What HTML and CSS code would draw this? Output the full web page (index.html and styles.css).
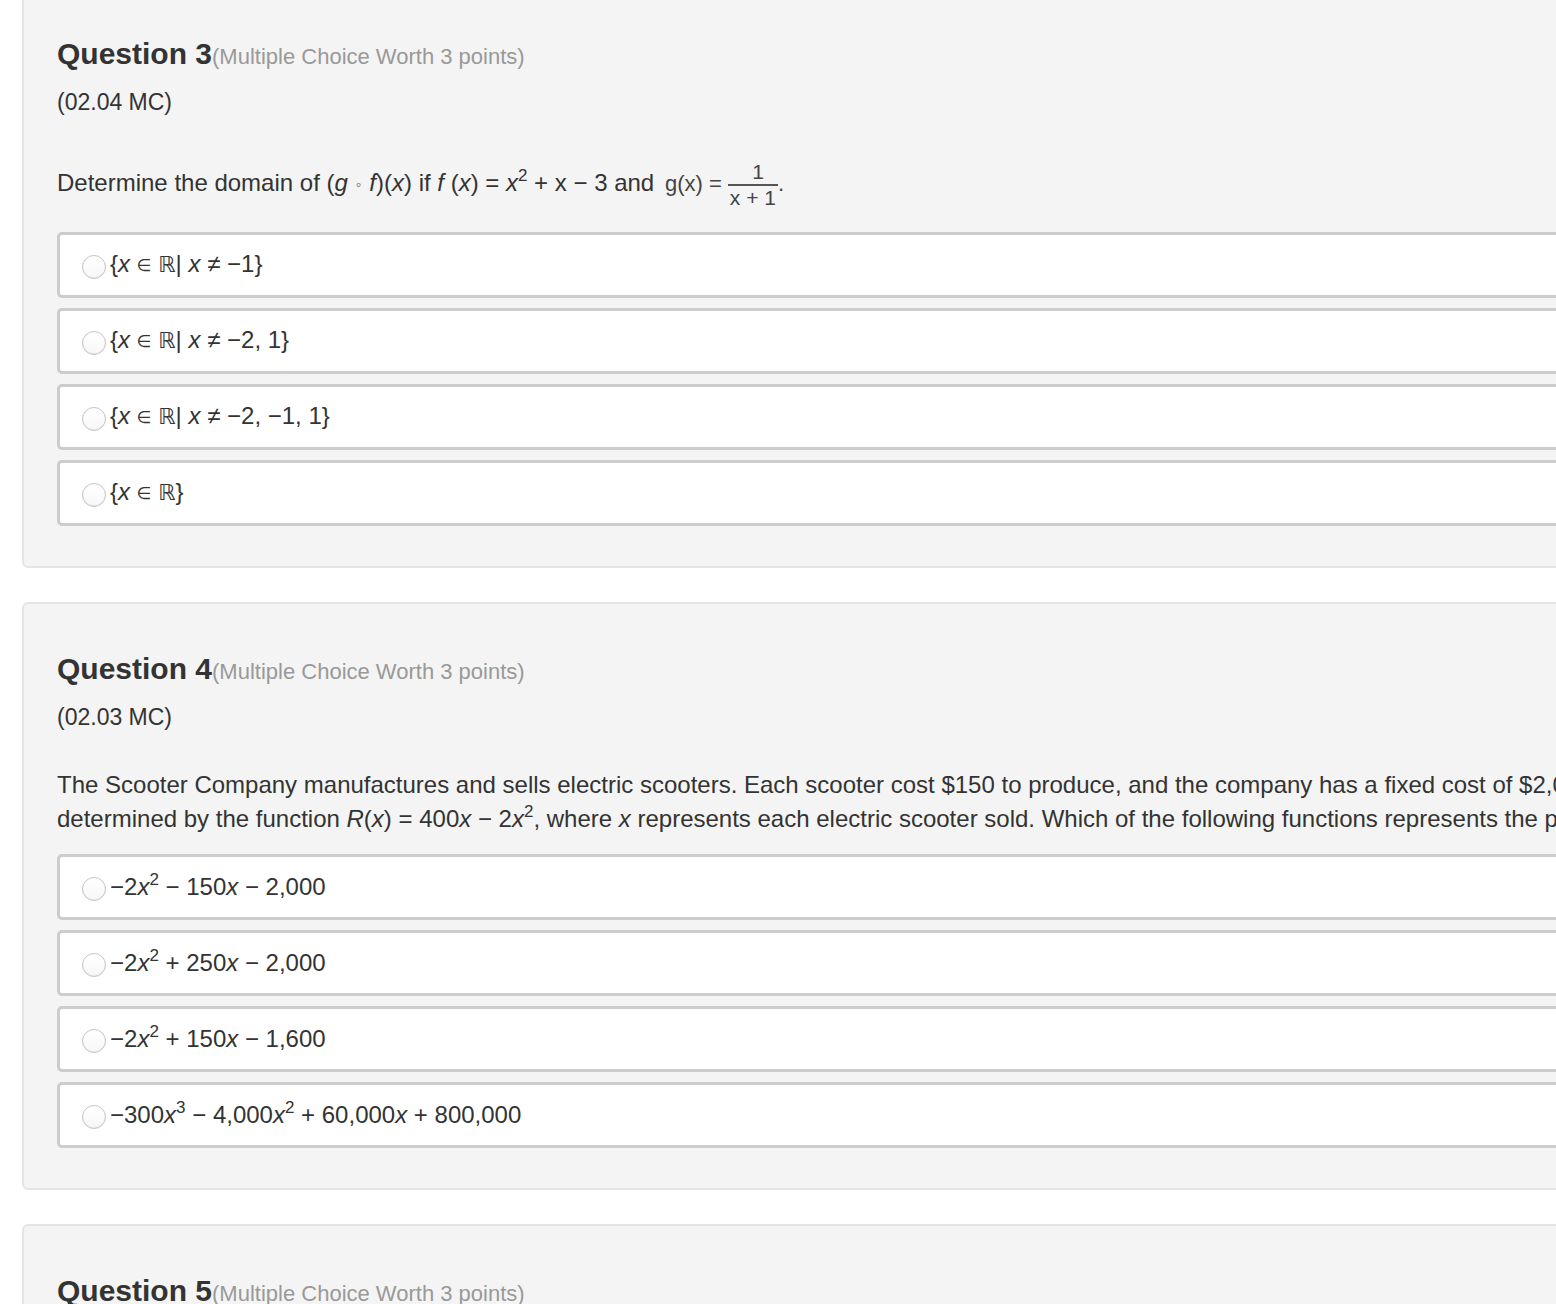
FILE: index.html
```html
<!DOCTYPE html>
<html lang="en">
<head>
<meta charset="utf-8">
<title>Questions</title>
<link rel="stylesheet" href="styles.css">
</head>
<body>
<div class="page">
  <section class="card">
    <h2 class="q-head">Question 3<span class="q-meta">(Multiple Choice Worth 3 points)</span></h2>
    <div class="q-code">(02.04 MC)</div>
    <p class="q-text q-text-frac">Determine the domain of (<i>g</i> <span class="ring">∘</span> <i>f</i>)(<i>x</i>) if <i>f</i> (<i>x</i>) = <i>x</i><sup>2</sup> + x − 3 and <span class="eq">g(x) = <span class="frac"><span class="num">1</span><span class="den">x + 1</span></span>.</span></p>
    <ul class="options">
      <li class="option"><span class="radio"></span><span class="opt-text">{<i>x</i> <span class="sym">∈</span> <span class="bb">ℝ</span>| <i>x</i> ≠ −1}</span></li>
      <li class="option"><span class="radio"></span><span class="opt-text">{<i>x</i> <span class="sym">∈</span> <span class="bb">ℝ</span>| <i>x</i> ≠ −2, 1}</span></li>
      <li class="option"><span class="radio"></span><span class="opt-text">{<i>x</i> <span class="sym">∈</span> <span class="bb">ℝ</span>| <i>x</i> ≠ −2, −1, 1}</span></li>
      <li class="option"><span class="radio"></span><span class="opt-text">{<i>x</i> <span class="sym">∈</span> <span class="bb">ℝ</span>}</span></li>
    </ul>
  </section>

  <section class="card">
    <h2 class="q-head">Question 4<span class="q-meta">(Multiple Choice Worth 3 points)</span></h2>
    <div class="q-code">(02.03 MC)</div>
    <p class="q-text">The Scooter Company manufactures and sells electric scooters. Each scooter cost $150 to produce, and the company has a fixed cost of $2,000. The revenue for the company is<br>determined by the function <i>R</i>(<i>x</i>) = 400<i>x</i> − 2<i>x</i><sup>2</sup>, where <i>x</i> represents each electric scooter sold. Which of the following functions represents the profit for the company?</p>
    <ul class="options">
      <li class="option"><span class="radio"></span><span class="opt-text">−2<i>x</i><sup>2</sup> − 150<i>x</i> − 2,000</span></li>
      <li class="option"><span class="radio"></span><span class="opt-text">−2<i>x</i><sup>2</sup> + 250<i>x</i> − 2,000</span></li>
      <li class="option"><span class="radio"></span><span class="opt-text">−2<i>x</i><sup>2</sup> + 150<i>x</i> − 1,600</span></li>
      <li class="option"><span class="radio"></span><span class="opt-text">−300<i>x</i><sup>3</sup> − 4,000<i>x</i><sup>2</sup> + 60,000<i>x</i> + 800,000</span></li>
    </ul>
  </section>

  <section class="card">
    <h2 class="q-head">Question 5<span class="q-meta">(Multiple Choice Worth 3 points)</span></h2>
    <div class="q-code">(02.03 MC)</div>
  </section>
</div>
</body>
</html>
```

FILE: styles.css
```css
html, body {
  margin: 0;
  padding: 0;
  overflow: hidden;
  background: #ffffff;
}

body {
  font-family: "Liberation Sans", Arial, "DejaVu Sans", sans-serif;
  color: #333333;
  font-size: 24px;
}

.page {
  width: 2600px;
  margin-top: -13px;
  padding-left: 22px;
}

.card {
  background: #f4f4f4;
  border: 2px solid #e5e5e5;
  border-radius: 6px;
  padding: 48px 40px 40px 33px;
  margin-bottom: 34px;
}

.q-head {
  margin: 0 0 13px 0;
  font-size: 30px;
  line-height: 34px;
  font-weight: bold;
  color: #333333;
}

.q-meta {
  font-size: 22px;
  font-weight: normal;
  color: #999999;
}

.q-code {
  font-size: 23px;
  line-height: 30px;
  margin: 0 0 36px 0;
}

.q-text {
  margin: 0 0 18px 0;
  line-height: 34px;
  font-size: 24px;
  white-space: nowrap;
}

.q-text-frac {
  padding: 7px 0 4px;
}

sup {
  font-size: 17px;
  line-height: 0;
  vertical-align: 10px;
}

.ring {
  font-size: 13px;
  color: #888;
  vertical-align: 2px;
}

.eq {
  font-family: "Liberation Sans", Arial, sans-serif;
  font-size: 22px;
  color: #444;
  margin-left: 4px;
}

.frac {
  display: inline-flex;
  flex-direction: column;
  align-items: center;
  vertical-align: middle;
  line-height: 24px;
  font-size: 21px;
}

.frac .num {
  border-bottom: 2px solid #555;
  align-self: stretch;
  text-align: right;
  padding: 0 14px 0 4px;
}

.frac .den {
  padding: 0 2px;
}

.options {
  list-style: none;
  margin: 0;
  padding: 0;
  display: flex;
  flex-direction: column;
  gap: 10px;
}

.option {
  display: flex;
  align-items: center;
  height: 60px;
  background: #ffffff;
  border: 3px solid #cccccc;
  border-radius: 5px;
  padding: 0 0 0 22px;
}

.radio {
  width: 22px;
  height: 22px;
  border-radius: 50%;
  border: 1px solid #c4c4c4;
  background: linear-gradient(#ffffff, #f7f7f7);
  box-shadow: inset 0 -1px 1px rgba(0,0,0,0.06);
  margin-top: 4px;
  margin-right: 4px;
  flex: none;
}

.opt-text {
  font-size: 24px;
  line-height: 30px;
}

.sym {
  font-size: 17px;
  vertical-align: 1px;
}

.bb {
  font-family: "DejaVu Sans", sans-serif;
  font-size: 22px;
}
```
